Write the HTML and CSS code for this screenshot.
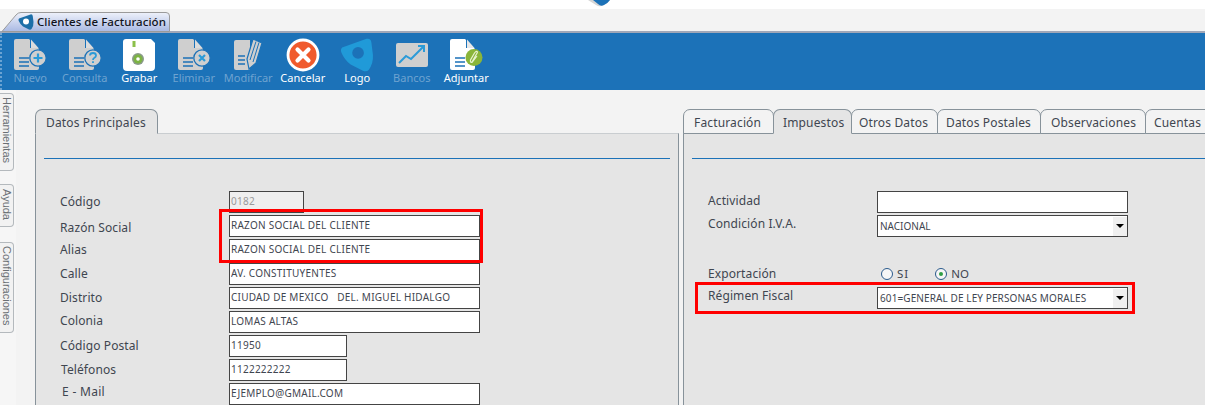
FILE: index.html
```html
<!DOCTYPE html>
<html lang="es">
<head>
<meta charset="utf-8">
<title>Clientes de Facturación</title>
<link rel="stylesheet" href="styles.css">
</head>
<body>
<svg class="defs" width="0" height="0">
  <defs>
    <symbol id="doc" viewBox="0 0 34 34">
      <path d="M1 3Q1 1 3 1H16L26 11V30Q26 32 24 32H3Q1 32 1 30Z" fill="#cfcfcf"/>
      <path d="M17 1L26 10H17Z" fill="#1c72b8"/>
      <path d="M18 1.5L25.5 10H18Z" fill="#dcdcdc"/>
      <path d="M6 20H16M6 24H16M6 28H16" stroke="#1c72b8" stroke-width="1.6"/>
    </symbol>
    <symbol id="logo" viewBox="0 0 32 32">
      <path d="M2 9L25 .8Q29 0 29.500 4L31 16Q31.500 24 27 30Q25 32 22 31L10 25Q4 20 1.500 14Q0 11 2 9Z" fill="currentColor"/>
    </symbol>
  </defs>
</svg>

<header class="top">
  <svg class="blob" width="24" height="7" viewBox="0 0 24 7"><path d="M1 0L9 5Q12 7 14 6Q20 4 23 0Z" fill="#d5d5d5"/><path d="M6 0L11 4Q14 7 17 5Q21 3 23 0Z" fill="#1c72b8"/></svg>
</header>

<nav class="tabstrip">
  <div class="doctab">
    <svg class="doctab-bg" width="170" height="20" viewBox="0 0 170 20">
      <defs><linearGradient id="tabg" x1="0" y1="0" x2="0" y2="1"><stop offset="0" stop-color="#eef1fa"/><stop offset="1" stop-color="#a9b9e3"/></linearGradient></defs>
      <path d="M1 19.500L15 3Q17 .5 20 .5H165Q168.500 .5 168.500 4V19.500Z" fill="url(#tabg)" stroke="#9a9a9a"/>
    </svg>
    <svg class="doctab-logo" width="16" height="16" viewBox="0 0 32 32"><use href="#logo" color="#1c6fa8"/><circle cx="16" cy="15" r="6" fill="#fff"/></svg>
    <span class="doctab-text">Clientes de Facturación</span>
  </div>
</nav>

<section class="toolbar">
  <div class="tool off">
    <svg class="ico" width="34" height="34" viewBox="0 0 34 34"><use href="#doc"/><circle cx="25" cy="20" r="8.200" fill="#cfcfcf" stroke="#1c72b8" stroke-width="1.300"/><path d="M25 15.500V24.500M20.500 20H29.500" stroke="#2b9bd8" stroke-width="2.200"/></svg>
    <span>Nuevo</span>
  </div>
  <div class="tool off">
    <svg class="ico" width="34" height="34" viewBox="0 0 34 34"><use href="#doc"/><circle cx="25" cy="20" r="8.200" fill="#cfcfcf" stroke="#1c72b8" stroke-width="1.300"/><path d="M22 17.500Q22 15 25 15T28 17.500Q28 19 26.500 19.800T25 22M25 23.200V25" fill="none" stroke="#2b9bd8" stroke-width="1.800"/></svg>
    <span>Consulta</span>
  </div>
  <div class="tool">
    <svg class="ico" width="34" height="34" viewBox="0 0 34 34"><path d="M4 1H29L33 5V29Q33 33 29 33H5Q1 33 1 29V4Q1 1 4 1Z" fill="#fff"/><rect x="10.500" y="3" width="3" height="6" fill="#8cc04a"/><circle cx="16" cy="21" r="6" fill="#8a9a8a"/><circle cx="16" cy="21" r="4.500" fill="#7cb342"/><circle cx="16" cy="21" r="1.800" fill="#fff"/></svg>
    <span>Grabar</span>
  </div>
  <div class="tool off">
    <svg class="ico" width="34" height="34" viewBox="0 0 34 34"><use href="#doc"/><circle cx="25" cy="20" r="8.200" fill="#cfcfcf" stroke="#1c72b8" stroke-width="1.300"/><path d="M22 17L28 23M28 17L22 23" stroke="#2b9bd8" stroke-width="2.200"/></svg>
    <span>Eliminar</span>
  </div>
  <div class="tool off">
    <svg class="ico" width="34" height="34" viewBox="0 0 34 34"><path d="M3 4Q3 2 5 2H19V30Q19 32 17 32H5Q3 32 3 30Z" fill="#cfcfcf"/><path d="M7 18H14M7 22H14M7 26H14" stroke="#1c72b8" stroke-width="1.600"/><path d="M22 1L31 5L25 25L18 31L16 21Z" fill="#cfcfcf" stroke="#1c72b8" stroke-width="1.200"/><path d="M25 3.500L19 22M28 4.500L22 24" stroke="#1c72b8"/></svg>
    <span>Modificar</span>
  </div>
  <div class="tool">
    <svg class="ico" width="34" height="34" viewBox="0 0 34 34"><circle cx="17" cy="17" r="15" fill="#f05a2c" stroke="#fff" stroke-width="2.800"/><path d="M11.500 11.500L22.500 22.500M22.500 11.500L11.500 22.500" stroke="#fff" stroke-width="4.200" stroke-linecap="round"/></svg>
    <span>Cancelar</span>
  </div>
  <div class="tool">
    <svg class="ico" width="34" height="34" viewBox="0 0 32 32"><use href="#logo" color="#209ad8"/><circle cx="17" cy="14" r="5.500" fill="#1c72b8"/></svg>
    <span>Logo</span>
  </div>
  <div class="tool off">
    <svg class="ico" width="34" height="34" viewBox="0 0 34 34"><rect x="1" y="5" width="32" height="24" rx="2" fill="#cfcfcf"/><path d="M4 25L11 18L16 21L22 15L28 9M23 8H29V14" fill="none" stroke="#2b9bd8" stroke-width="2"/></svg>
    <span>Bancos</span>
  </div>
  <div class="tool">
    <svg class="ico" width="34" height="34" viewBox="0 0 34 34"><path d="M1 3Q1 1 3 1H16L26 11V30Q26 32 24 32H3Q1 32 1 30Z" fill="#fff"/><path d="M17 1L26 10H17Z" fill="#1c72b8"/><path d="M18 1.500L25.500 10H18Z" fill="#e8e8e8"/><path d="M6 20H16M6 24H16M6 28H16" stroke="#1c72b8" stroke-width="1.600"/><circle cx="25" cy="19.500" r="8.500" fill="#8ab53a"/><path d="M23 24L27.500 16Q29 14 28 13.500T25.500 15L21.500 22Q21 24.500 23 24.500L28 18" fill="none" stroke="#e8f2d0" stroke-width="1.200"/></svg>
    <span>Adjuntar</span>
  </div>
</section>

<main class="main">
  <aside class="side">
    <div class="sidetab">Herramientas</div>
    <div class="sidetab">Ayuda</div>
    <div class="sidetab">Configuraciones</div>
  </aside>

  <div class="panels">
    <section class="panel panel-left">
      <div class="tabs">
        <div class="tab active main-tab">Datos Principales</div>
      </div>
      <div class="body">
        <hr class="rule">
        <div class="form">
          <label class="lbl">Código</label><input class="in short ro" value="0182" readonly>
          <label class="lbl lo">Razón Social</label><input class="in" value="RAZON SOCIAL DEL CLIENTE">
          <label class="lbl">Alias</label><input class="in" value="RAZON SOCIAL DEL CLIENTE">
          <label class="lbl">Calle</label><input class="in" value="AV. CONSTITUYENTES">
          <label class="lbl">Distrito</label><input class="in" value="CIUDAD DE MEXICO   DEL. MIGUEL HIDALGO">
          <label class="lbl hi">Colonia</label><input class="in" value="LOMAS ALTAS">
          <label class="lbl">Código Postal</label><input class="in mid" value="11950">
          <label class="lbl ind1">Teléfonos</label><input class="in mid" value="1122222222">
          <label class="lbl hi2 ind">E - Mail</label><input class="in" value="EJEMPLO@GMAIL.COM">
        </div>
      </div>
      <div class="mark mark-a"></div>
    </section>

    <section class="panel panel-right">
      <div class="tabs">
        <div class="tab t1">Facturación</div>
        <div class="tab active t2">Impuestos</div>
        <div class="tab t3">Otros Datos</div>
        <div class="tab t4">Datos Postales</div>
        <div class="tab t5">Observaciones</div>
        <div class="tab t6">Cuentas</div>
      </div>
      <div class="body">
        <hr class="rule">
        <div class="form form-right">
          <label class="lbl up2">Actividad</label><input class="in" value="">
          <label class="lbl up4">Condición I.V.A.</label>
          <div class="sel"><span>NACIONAL</span><i class="arrow"></i></div>
          <div class="spacer"></div>
          <label class="lbl">Exportación</label>
          <div class="radios">
            <span class="radio"></span><span class="rtext">S I</span>
            <span class="radio on"></span><span class="rtext">NO</span>
          </div>
          <label class="lbl up5">Régimen Fiscal</label>
          <div class="sel"><span class="wide">601=GENERAL DE LEY PERSONAS MORALES</span><i class="arrow"></i></div>
        </div>
      </div>
      <div class="mark mark-b"></div>
    </section>
  </div>
</main>
</body>
</html>
```

FILE: styles.css
```css
* { box-sizing: border-box; }
html, body { margin: 0; height: 405px; overflow: hidden; background: #f3f3f3; }
body { font-family: "Noto Sans", sans-serif; color: #3f4650; position: relative; }
.defs { position: absolute; }

.top { height: 9px; background: #fff; position: relative; }
.blob { position: absolute; left: 587px; top: 0; }

.tabstrip { height: 24px; padding: 3px 0 0 1px; border-bottom: 2px solid #a0a7b8; }
.doctab { position: relative; width: 170px; height: 19px; display: flex; align-items: center; padding-left: 17px; }
.doctab-bg { position: absolute; left: 0; top: 0; }
.doctab-logo { position: relative; margin-right: 3px; }
.doctab-text { position: relative; font-size: 11.500px; font-weight: 500; letter-spacing: .05px; color: #10131c; white-space: nowrap; }

.toolbar { height: 57px; background: #1c72b8; display: flex; padding: 5px 0 0 1px; border-left: 2px dotted #6ba3d2; }
.tool { width: 54.500px; flex: none; display: flex; flex-direction: column; align-items: center; color: #fff; font-size: 11px; line-height: 14px; }
.tool .ico { display: block; margin-bottom: -1px; }
.tool.off { color: #6ea3d0; }

.main { display: flex; height: 315px; }
.side { width: 16px; background: #f6f6f6; padding-top: 3px; display: flex; flex-direction: column; gap: 13px; flex: none; }
.sidetab { width: 14px; writing-mode: vertical-rl; font-family: "Liberation Sans", sans-serif; font-size: 11px; color: #6a6f74; border: 1px solid #b4b9bd; border-left: 0; border-radius: 0 4px 4px 0; background: #f2f2f2; padding: 0 0 3px; line-height: 12px; text-align: center; }
.sidetab:nth-child(1) { height: 78px; }
.sidetab:nth-child(2) { height: 43px; }
.sidetab:nth-child(3) { height: 91px; margin-top: 2px; }

.panels { flex: 1; display: flex; gap: 4px; padding: 19px 0 0 19px; min-width: 0; }
.panel { position: relative; display: flex; flex-direction: column; }
.panel-left { width: 644px; flex: none; }
.panel-right { flex: 1; min-width: 0; }

.tabs { display: flex; height: 25px; flex: none; }
.tab { height: 25px; border: 1px solid #87929a; border-radius: 7px 7px 0 0; background: #f3f3f3; font-size: 12px; letter-spacing: .15px; line-height: 26px; white-space: nowrap; flex: none; position: relative; }
.tab.active { background: #e5e5e5; border-bottom-color: #e5e5e5; z-index: 1; }
.main-tab { width: 123px; padding-left: 10px; }
.t1 { width: 91px; padding-left: 10px; }
.t2 { width: 79px; margin-left: -1px; padding-left: 9px; }
.t3 { width: 87px; margin-left: -1px; padding-left: 7px; }
.t4 { width: 104px; margin-left: -1px; padding-left: 8px; }
.t5 { width: 106px; margin-left: -1px; padding-left: 10px; }
.t6 { width: 70px; margin-left: -1px; padding-left: 8px; }

.body { flex: 1; margin-top: -1px; background: #e5e5e5; border-left: 1px solid #87929a; border-top: 1px solid #87929a; padding: 24px 8px 0; }
.panel-left .body { border-right: 1px solid #87929a; border-top-color: #c9cdd0; }
.panel-right .body { padding-right: 0; }
.rule { border: 0; height: 1px; background: #1c72b8; margin: 0; }

.form { display: grid; grid-template-columns: 169px 1fr; grid-auto-rows: 22px; row-gap: 2px; margin: 32px 190px 0 16px; align-items: center; }
.form-right { margin: 32px 77px 0 16px; grid-template-columns: 169px 251px; }
.lbl { font-size: 12px; line-height: 16px; letter-spacing: .1px; white-space: nowrap; }
.lo { padding-top: 4px; }
.hi { padding-bottom: 3px; }
.hi2 { padding-bottom: 4px; letter-spacing: .3px; }
.ind { padding-left: 2px; }
.ind1 { padding-left: 1px; }
.up2 { padding-bottom: 2px; }
.up4 { padding-bottom: 4px; }
.up5 { padding-bottom: 5px; }
.in { height: 22px; width: 251px; border: 1px solid #444; background: #fff; padding: 0 1px 2px; font-family: "Noto Sans", sans-serif; font-size: 10px; letter-spacing: .25px; color: #3f4650; outline: 0; border-radius: 0; white-space: pre; }
.short { width: 75px; }
.mid { width: 118px; }
.ro { background: #efefef; color: #9a9a9a; }
.spacer { grid-column: 1 / -1; height: 22px; }

.sel { position: relative; height: 22px; width: 251px; border: 1px solid #444; background: #fff; font-size: 10px; line-height: 21px; padding: 0 2px; white-space: nowrap; color: #3f4650; }
.wide { letter-spacing: .1px; }
.arrow { position: absolute; right: 0; top: 1px; width: 14px; height: 19px; background: #f0f0f0; }
.arrow::after { content: ""; position: absolute; left: 3px; top: 7px; border: 4px solid transparent; border-top: 4px solid #000; border-bottom: 0; }

.radios { display: flex; align-items: center; padding-left: 4px; font-size: 11.500px; }
.radio { width: 12px; height: 12px; border: 1px solid #2a5a8c; border-radius: 50%; background: #f6f6f6; position: relative; }
.radio.on { margin-left: 27px; }
.radio.on::after { content: ""; position: absolute; left: 3px; top: 3px; width: 4px; height: 4px; border-radius: 50%; background: #2f9e44; }
.rtext { margin-left: 4px; line-height: 12px; word-spacing: -2px; }

.mark { position: absolute; border: 3px solid #f00; pointer-events: none; z-index: 2; }
.mark-a { left: 184px; top: 100px; width: 264px; height: 54px; }
.mark-b { left: 12px; top: 173px; width: 440px; height: 32px; }
```
